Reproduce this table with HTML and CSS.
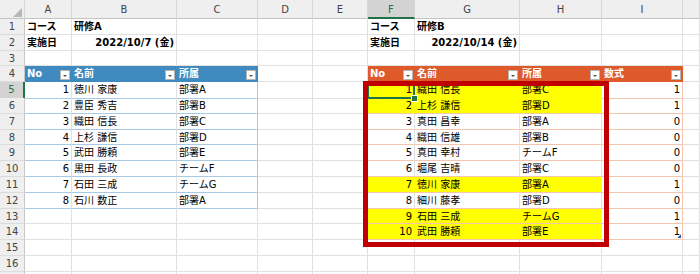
FILE: index.html
```html
<!DOCTYPE html>
<html lang="ja">
<head>
<meta charset="utf-8">
<title>Sheet</title>
<link rel="stylesheet" href="styles.css">
</head>
<body>
<div class="sheet">
  <div class="row hdr">
    <div class="corner"><span class="tri"></span></div>
    <div>A</div><div>B</div><div>C</div><div>D</div><div>E</div><div class="selcol">F</div><div>G</div><div>H</div><div>I</div><div></div>
  </div>
  <div class="row">
    <div class="rh">1</div>
    <div class="b">コース</div><div class="b">研修A</div><div></div><div></div><div></div><div class="b">コース</div><div class="b">研修B</div><div></div><div></div><div></div>
  </div>
  <div class="row">
    <div class="rh">2</div>
    <div class="b">実施日</div><div class="b n">2022/10/7 (金)</div><div></div><div></div><div></div><div class="b">実施日</div><div class="b n">2022/10/14 (金)</div><div></div><div></div><div></div>
  </div>
  <div class="row">
    <div class="rh">3</div>
    <div></div><div></div><div></div><div></div><div></div><div></div><div></div><div></div><div></div><div></div>
  </div>
  <div class="row">
    <div class="rh">4</div>
    <div class="th blue"><span class="t">No</span><span class="fb"></span></div>
    <div class="th blue"><span class="t">名前</span><span class="fb"></span></div>
    <div class="th blue"><span class="t">所属</span><span class="fb"></span></div>
    <div></div><div></div>
    <div class="th org"><span class="t">No</span><span class="fb"></span></div>
    <div class="th org"><span class="t">名前</span><span class="fb"></span></div>
    <div class="th org"><span class="t">所属</span><span class="fb"></span></div>
    <div class="th org"><span class="t">数式</span><span class="fb"></span></div>
    <div></div>
  </div>
  <div class="row">
    <div class="rh selrow">5</div>
    <div class="tb n">1</div><div class="tb">徳川 家康</div><div class="tb tbr">部署A</div><div></div><div></div>
    <div class="to y n active">1</div><div class="to y">織田 信長</div><div class="to y">部署C</div><div class="to tor n">1</div><div></div>
  </div>
  <div class="row">
    <div class="rh">6</div>
    <div class="tb n">2</div><div class="tb">豊臣 秀吉</div><div class="tb tbr">部署B</div><div></div><div></div>
    <div class="to y n">2</div><div class="to y">上杉 謙信</div><div class="to y">部署D</div><div class="to tor n">1</div><div></div>
  </div>
  <div class="row">
    <div class="rh">7</div>
    <div class="tb n">3</div><div class="tb">織田 信長</div><div class="tb tbr">部署C</div><div></div><div></div>
    <div class="to n">3</div><div class="to">真田 昌幸</div><div class="to">部署A</div><div class="to tor n">0</div><div></div>
  </div>
  <div class="row">
    <div class="rh">8</div>
    <div class="tb n">4</div><div class="tb">上杉 謙信</div><div class="tb tbr">部署D</div><div></div><div></div>
    <div class="to n">4</div><div class="to">織田 信雄</div><div class="to">部署B</div><div class="to tor n">0</div><div></div>
  </div>
  <div class="row">
    <div class="rh">9</div>
    <div class="tb n">5</div><div class="tb">武田 勝頼</div><div class="tb tbr">部署E</div><div></div><div></div>
    <div class="to n">5</div><div class="to">真田 幸村</div><div class="to">チームF</div><div class="to tor n">0</div><div></div>
  </div>
  <div class="row">
    <div class="rh">10</div>
    <div class="tb n">6</div><div class="tb">黒田 長政</div><div class="tb tbr">チームF</div><div></div><div></div>
    <div class="to n">6</div><div class="to">堀尾 吉晴</div><div class="to">部署C</div><div class="to tor n">0</div><div></div>
  </div>
  <div class="row">
    <div class="rh">11</div>
    <div class="tb n">7</div><div class="tb">石田 三成</div><div class="tb tbr">チームG</div><div></div><div></div>
    <div class="to y n">7</div><div class="to y">徳川 家康</div><div class="to y">部署A</div><div class="to tor n">1</div><div></div>
  </div>
  <div class="row">
    <div class="rh">12</div>
    <div class="tb n">8</div><div class="tb">石川 数正</div><div class="tb tbr">部署A</div><div></div><div></div>
    <div class="to n">8</div><div class="to">細川 藤孝</div><div class="to">部署D</div><div class="to tor n">0</div><div></div>
  </div>
  <div class="row">
    <div class="rh">13</div>
    <div></div><div></div><div></div><div></div><div></div>
    <div class="to y n">9</div><div class="to y">石田 三成</div><div class="to y">チームG</div><div class="to tor n">1</div><div></div>
  </div>
  <div class="row">
    <div class="rh">14</div>
    <div></div><div></div><div></div><div></div><div></div>
    <div class="to y n">10</div><div class="to y">武田 勝頼</div><div class="to y">部署E</div><div class="to tor n grip">1</div><div></div>
  </div>
  <div class="row">
    <div class="rh">15</div>
    <div></div><div></div><div></div><div></div><div></div><div></div><div></div><div></div><div></div><div></div>
  </div>
  <div class="row">
    <div class="rh">16</div>
    <div></div><div></div><div></div><div></div><div></div><div></div><div></div><div></div><div></div><div></div>
  </div>
  <div class="row">
    <div class="rh"></div>
    <div></div><div></div><div></div><div></div><div></div><div></div><div></div><div></div><div></div><div></div>
  </div>
  <div class="redbox"></div>
</div>
</body>
</html>
```
FILE: styles.css
```css
body {
  margin: 0;
  background: #ffffff;
  font-family: "DejaVu Sans", "Noto Sans CJK JP", sans-serif;
  font-size: 10px;
  color: #000000;
}

.sheet {
  position: relative;
  width: 700px;
  height: 274px;
  overflow: hidden;
}

.row {
  display: grid;
  grid-template-columns: 25px 47px 105px 81px 55px 55px 47px 105px 82px 81px 17px;
  height: 15.8px;
}

.row > div {
  box-sizing: border-box;
  border-right: 1px solid #e1e1e1;
  border-bottom: 1px solid #e1e1e1;
  padding: 0 2px;
  line-height: 16px;
  white-space: nowrap;
  overflow: hidden;
}

.hdr {
  height: 19px;
}

.hdr > div {
  background: #efefef;
  border-right-color: #d6d6d6;
  border-bottom-color: #c4c4c4;
  text-align: center;
  line-height: 19px;
  color: #444444;
}

.corner {
  position: relative;
}

.tri {
  position: absolute;
  right: 2px;
  bottom: 1px;
  width: 9px;
  height: 9px;
  background: #b7b7b7;
  clip-path: polygon(100% 0, 100% 100%, 0 100%);
}

.hdr > .selcol {
  background: #d3d3d3;
  color: #217346;
  border-bottom: 2px solid #217346;
}

.row > .rh {
  background: #efefef;
  border-right-color: #c8c8c8;
  border-bottom-color: #dcdcdc;
  text-align: center;
  color: #444444;
  padding: 0;
}

.row > .selrow {
  background: #d3d3d3;
  color: #217346;
  border-right: 2px solid #217346;
}

.b {
  font-weight: bold;
}

.n {
  text-align: right;
}

.row > .th {
  display: flex;
  justify-content: space-between;
  align-items: flex-end;
  color: #ffffff;
  font-weight: bold;
  padding-right: 1px;
}

.th .t {
  align-self: center;
}

.row > .blue {
  background: #3f8abf;
  border-right-color: #3f8abf;
  border-bottom-color: #3f8abf;
}

.row > .org {
  background: #df5a2b;
  border-right-color: #df5a2b;
  border-bottom-color: #df5a2b;
}

.fb {
  position: relative;
  flex: none;
  width: 10px;
  height: 10px;
  box-sizing: border-box;
  background: #ffffff;
  border: 1px solid #b4b4b4;
  margin-bottom: 1px;
}

.fb::after {
  content: "";
  position: absolute;
  left: 2px;
  top: 4px;
  border-left: 2px solid transparent;
  border-right: 2px solid transparent;
  border-top: 2px solid #555555;
}

.row > .tb {
  border-bottom-color: #a7cbe6;
}

.row > .tbr {
  border-right-color: #a7cbe6;
}

.row > .to {
  border-bottom-color: #f6c5b0;
}

.row > .tor {
  border-right-color: #f6c5b0;
}

.row > .y {
  background: #ffff00;
  border-right-color: #ffff00;
}

.row > .active {
  position: relative;
  overflow: visible;
}

.active::before {
  content: "";
  position: absolute;
  left: -1px;
  top: -1px;
  right: -1px;
  bottom: -1px;
  border: 2px solid #217346;
}

.active::after {
  content: "";
  position: absolute;
  right: -4px;
  bottom: -4px;
  width: 5px;
  height: 5px;
  background: #217346;
  border: 1px solid #ffffff;
}

.row > .grip {
  position: relative;
}

.grip::after {
  content: "";
  position: absolute;
  right: 1px;
  bottom: 1px;
  width: 4px;
  height: 4px;
  background: #2f5597;
  clip-path: polygon(100% 0, 100% 100%, 0 100%);
}

.redbox {
  position: absolute;
  left: 363px;
  top: 81px;
  width: 246px;
  height: 166px;
  box-sizing: border-box;
  border: 5px solid #c00000;
}
```
